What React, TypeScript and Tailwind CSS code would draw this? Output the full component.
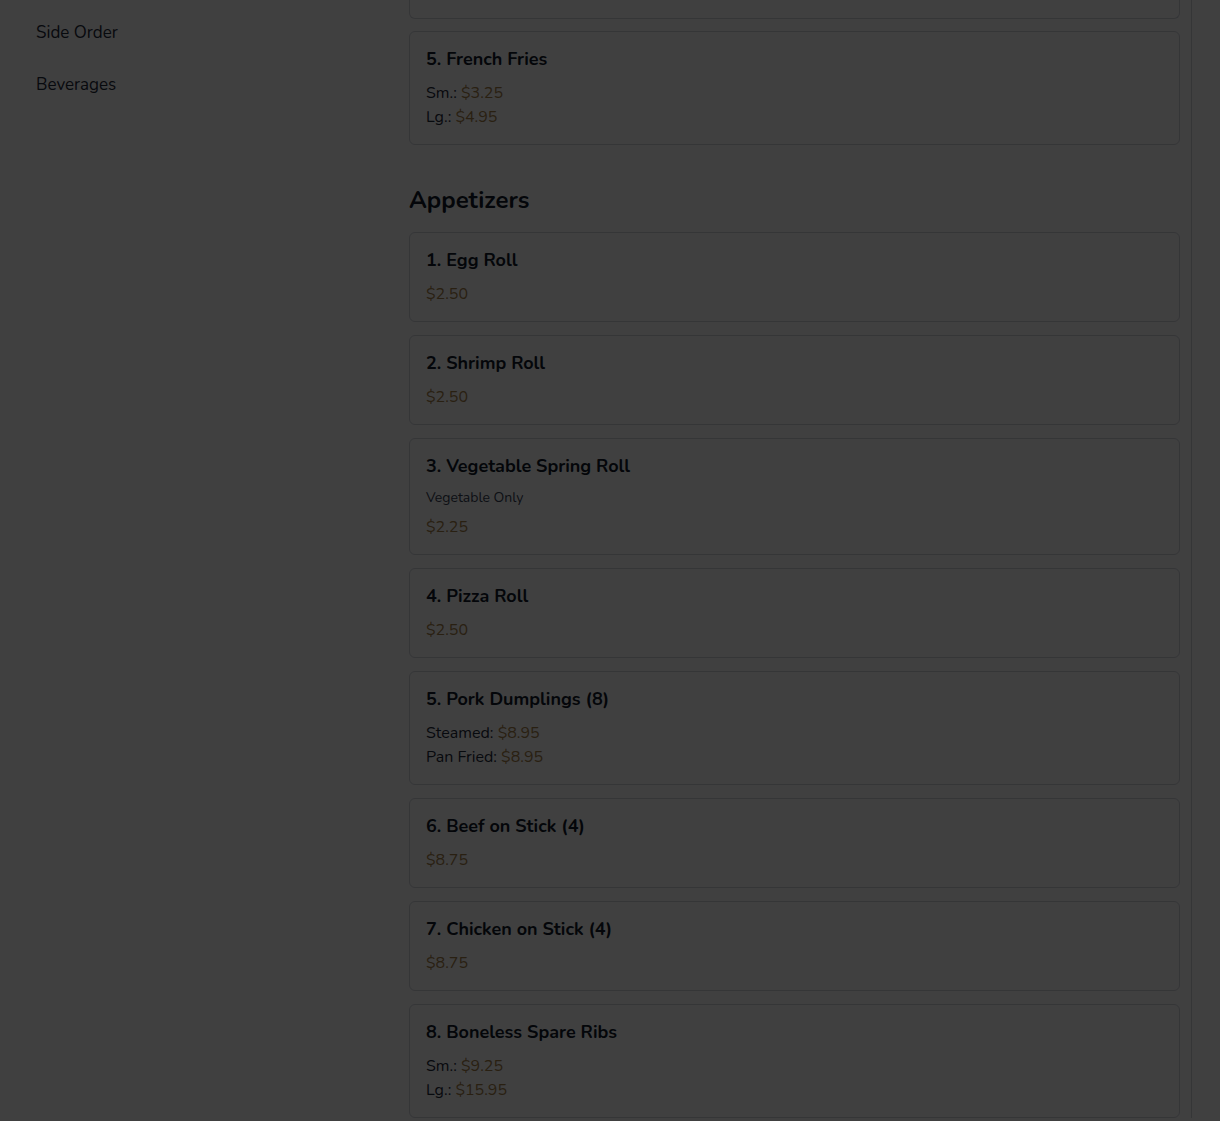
import React from "react";

type Price = { label?: string; value: string };
type Item = { name: string; desc?: string; prices: Price[] };

const appetizers: Item[] = [
  { name: "1. Egg Roll", prices: [{ value: "$2.50" }] },
  { name: "2. Shrimp Roll", prices: [{ value: "$2.50" }] },
  { name: "3. Vegetable Spring Roll", desc: "Vegetable Only", prices: [{ value: "$2.25" }] },
  { name: "4. Pizza Roll", prices: [{ value: "$2.50" }] },
  {
    name: "5. Pork Dumplings (8)",
    prices: [
      { label: "Steamed", value: "$8.95" },
      { label: "Pan Fried", value: "$8.95" },
    ],
  },
  { name: "6. Beef on Stick (4)", prices: [{ value: "$8.75" }] },
  { name: "7. Chicken on Stick (4)", prices: [{ value: "$8.75" }] },
  {
    name: "8. Boneless Spare Ribs",
    prices: [
      { label: "Sm.", value: "$9.25" },
      { label: "Lg.", value: "$15.95" },
    ],
  },
];

function MenuCard({ item }: { item: Item }) {
  return (
    <div className="rounded-md border border-gray-300 bg-white px-4 pt-[17px] pb-[15px]">
      <h3 className="text-[18px] leading-5 font-bold text-gray-900">{item.name}</h3>
      {item.desc && (
        <p className="mt-3 text-[14px] leading-[19px] text-gray-700">{item.desc}</p>
      )}
      <div className={item.desc ? "mt-2" : "mt-3"}>
        {item.prices.map((p, i) => (
          <div key={i} className="text-[16px] leading-6 text-gray-800">
            {p.label && <span>{p.label}: </span>}
            <span className="text-[#a5804a]">{p.value}</span>
          </div>
        ))}
      </div>
    </div>
  );
}

export default function App() {
  return (
    <div
      className="relative h-[1121px] overflow-hidden bg-white"
      style={{ fontFamily: "Nunito, Lato, 'Open Sans', sans-serif" }}
    >
      <div className="flex">
        {/* sidebar */}
        <aside className="w-[409px] shrink-0 px-9 pt-[7px]">
          <nav className="flex flex-col">
            <a className="flex h-[52px] items-center text-[17px] text-gray-800">Side Order</a>
            <a className="flex h-[52px] items-center text-[17px] text-gray-800">Beverages</a>
          </nav>
        </aside>

        {/* menu column */}
        <main className="w-[783px] shrink-0 border-r border-gray-300 pr-[11px]">
          {/* tail of previous card (scrolled) */}
          <div className="h-[19px] rounded-b-md border border-t-0 border-gray-300" />
          <div className="mt-3">
            <MenuCard
              item={{
                name: "5. French Fries",
                prices: [
                  { label: "Sm.", value: "$3.25" },
                  { label: "Lg.", value: "$4.95" },
                ],
              }}
            />
          </div>

          <section className="mt-[39px]">
            <h2 className="mb-4 text-[24px] leading-8 font-bold text-gray-900">Appetizers</h2>
            <div className="flex flex-col gap-[13px]">
              {appetizers.map((it) => (
                <MenuCard key={it.name} item={it} />
              ))}
            </div>
          </section>
        </main>
      </div>

      {/* modal backdrop */}
      <div className="absolute inset-0 bg-black/75" />
    </div>
  );
}
